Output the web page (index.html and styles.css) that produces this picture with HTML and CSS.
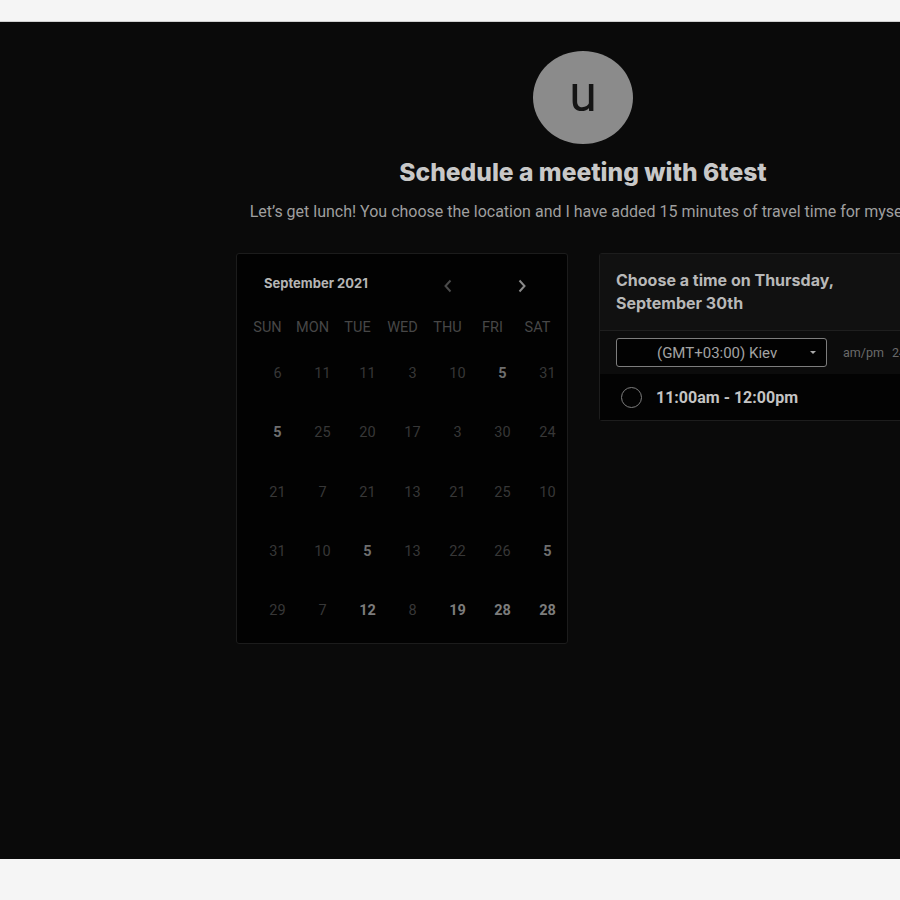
FILE: index.html
```html
<!DOCTYPE html>
<html>
<head>
<meta charset="utf-8">
<link rel="stylesheet" href="styles.css">
</head>
<body>
<div class="frame">
  <div class="stage">
    <div class="page">
      <div class="avatar"><span>u</span></div>
      <h1 class="title">Schedule a meeting with 6test</h1>
      <p class="subtitle">Let’s get lunch! You choose the location and I have added 15 minutes of travel time for myself.</p>
      <div class="cards">
        <div class="calendar">
          <div class="cal-head">
            <span class="month">September 2021</span>
            <span class="nav prev"><svg width="10" height="14" viewBox="0 0 10 14"><path d="M7.5 1.5 L2.5 7 L7.5 12.5" fill="none" stroke="#4a4a4a" stroke-width="2"/></svg></span>
            <span class="nav next"><svg width="10" height="14" viewBox="0 0 10 14"><path d="M2.5 1.5 L7.5 7 L2.5 12.5" fill="none" stroke="#8a8a8a" stroke-width="2"/></svg></span>
          </div>
          <div class="grid dow">
            <span>SUN</span><span>MON</span><span>TUE</span><span>WED</span><span>THU</span><span>FRI</span><span>SAT</span>
          </div>
          <div class="grid days">
            <span>6</span><span>11</span><span>11</span><span>3</span><span>10</span><span class="on">5</span><span>31</span>
            <span class="on">5</span><span>25</span><span>20</span><span>17</span><span>3</span><span>30</span><span>24</span>
            <span>21</span><span>7</span><span>21</span><span>13</span><span>21</span><span>25</span><span>10</span>
            <span>31</span><span>10</span><span class="on">5</span><span>13</span><span>22</span><span>26</span><span class="on">5</span>
            <span>29</span><span>7</span><span class="on hi">12</span><span>8</span><span class="on hi">19</span><span class="on hi">28</span><span class="on hi">28</span>
          </div>
        </div>
        <div class="times">
          <div class="times-head">Choose a time on Thursday,<br>September 30th</div>
          <div class="tz-row">
            <div class="select"><span class="tz">(GMT+03:00) Kiev</span><span class="caret"></span></div>
            <span class="fmt">am/pm</span><span class="fmt">24h</span>
          </div>
          <div class="slot">
            <span class="radio"></span>
            <span class="slot-text">11:00am - 12:00pm</span>
          </div>
        </div>
      </div>
    </div>
  </div>
</div>
</body>
</html>
```
FILE: styles.css
```css
html, body {
  margin: 0;
  padding: 0;
  background: #f5f5f5;
  overflow: hidden;
}
.frame {
  padding-top: 21px;
  height: 879px;
  box-sizing: border-box;
}
.stage {
  height: 837px;
  background: #0a0a0a;
  border-top: 1px solid #cfcfcf;
  overflow: hidden;
  width: 900px;
}
.page {
  width: 1166px;
  display: flex;
  flex-direction: column;
  align-items: center;
  font-family: Roboto, "Liberation Sans", sans-serif;
}
.avatar {
  margin-top: 29px;
  width: 100px;
  height: 93px;
  border-radius: 50%;
  background: #8b8b8b;
  display: flex;
  align-items: center;
  justify-content: center;
}
.avatar span {
  font-family: Roboto, "Liberation Sans", sans-serif;
  font-size: 50px;
  color: #151515;
  line-height: 1;
  margin-top: -8px;
}
.title {
  margin: 13px 0 0;
  font-family: Inter, "Liberation Sans", sans-serif;
  font-weight: 800;
  font-size: 24.6px;
  line-height: 30px;
  color: #c8c8c8;
}
.subtitle {
  margin: 14px 0 0;
  font-size: 16px;
  line-height: 22px;
  color: #9f9f9f;
  white-space: nowrap;
}
.cards {
  margin-top: 30px;
  display: flex;
  gap: 31px;
  align-items: flex-start;
}
.calendar {
  width: 332px;
  height: 391px;
  box-sizing: border-box;
  background: #020202;
  border: 1px solid #1c1c1c;
  border-radius: 3px;
  padding: 9px 0 0 8px;
}
.cal-head {
  height: 40px;
  display: flex;
  align-items: center;
  position: relative;
}
.month {
  margin-left: 19px;
  font-family: Inter, "Liberation Sans", sans-serif;
  font-weight: 700;
  font-size: 13px;
  color: #b5b5b5;
}
.nav {
  position: absolute;
  top: 16px;
  display: flex;
}
.prev { left: 198px; }
.next { left: 272px; }
.grid {
  display: grid;
  grid-template-columns: repeat(7, 45px);
}
.dow {
  height: 32px;
  margin-top: 8px;
  align-items: center;
}
.dow span {
  text-align: center;
  font-size: 14.5px;
  color: #474747;
}
.days {
  margin-top: 1px;
  grid-auto-rows: 59.3px;
  align-items: center;
}
.days span {
  text-align: center;
  padding-left: 20px;
  font-size: 14.5px;
  color: #373737;
}
.days span.on {
  color: #6e6e6e;
  font-weight: 700;
}
.days span.hi {
  color: #7c7c7c;
}
.times {
  width: 331px;
  box-sizing: border-box;
  background: #0f0f0f;
  border: 1px solid #1d1d1d;
  border-radius: 3px;
}
.times-head {
  padding: 15px 16px 15px;
  font-family: Inter, "Liberation Sans", sans-serif;
  font-weight: 700;
  font-size: 16px;
  line-height: 23px;
  color: #b8b8b8;
  background: #111111;
  border-bottom: 1px solid #1f1f1f;
}
.tz-row {
  height: 43px;
  display: flex;
  align-items: center;
  padding-left: 16px;
  background: #0c0c0c;
  white-space: nowrap;
}
.select {
  width: 211px;
  height: 29px;
  box-sizing: border-box;
  border: 1px solid #7d7d7d;
  border-radius: 3px;
  background: #020202;
  display: flex;
  align-items: center;
  position: relative;
}
.tz {
  margin-left: 40px;
  font-size: 15px;
  color: #a3a3a3;
}
.caret {
  position: absolute;
  right: 10px;
  top: 12px;
  width: 0;
  height: 0;
  border-left: 3px solid transparent;
  border-right: 3px solid transparent;
  border-top: 3px solid #aaa;
}
.fmt {
  margin-left: 16px;
  font-size: 12.5px;
  color: #6a6a6a;
}
.fmt + .fmt {
  margin-left: 8px;
}
.slot {
  height: 46px;
  display: flex;
  align-items: center;
  padding-left: 21px;
  background: #030303;
}
.radio {
  width: 19px;
  height: 19px;
  border: 1.5px solid #7e7e7e;
  border-radius: 50%;
}
.slot-text {
  margin-left: 14px;
  font-weight: 700;
  font-size: 16px;
  color: #c4c4c4;
}
```
